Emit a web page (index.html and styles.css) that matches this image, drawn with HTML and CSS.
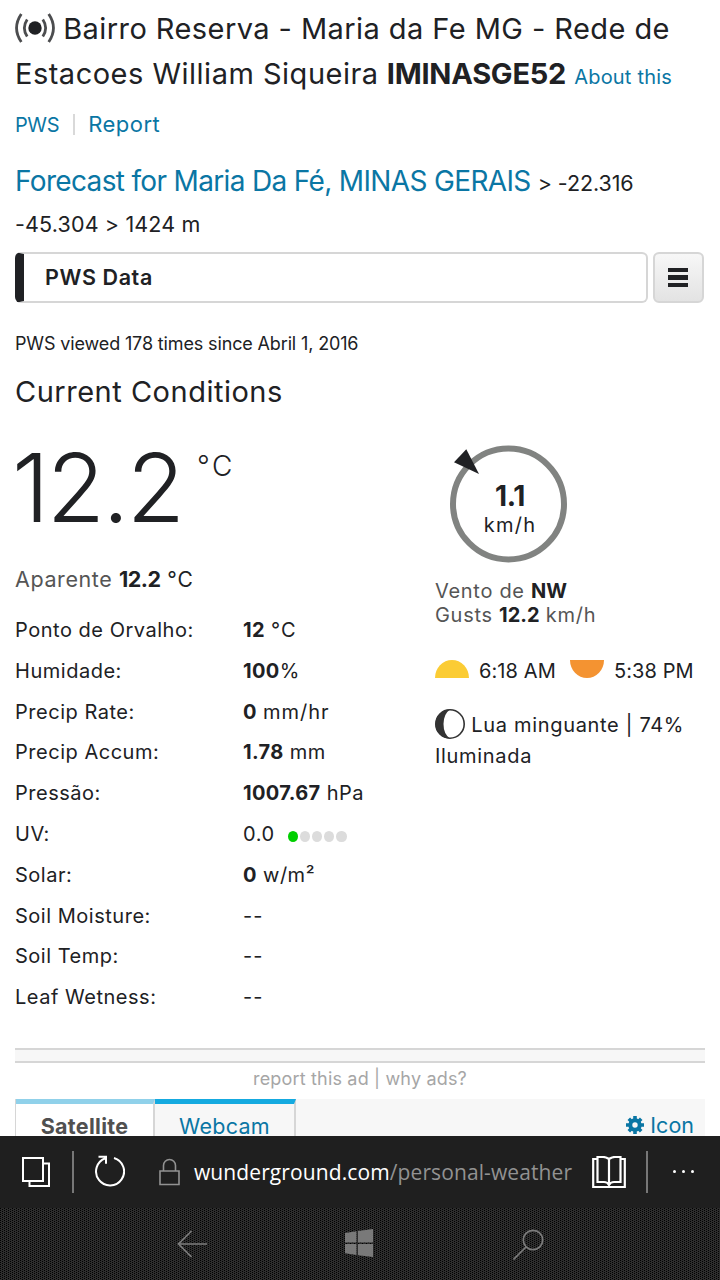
FILE: index.html
```html
<!DOCTYPE html>
<html lang="pt">
<head>
<meta charset="utf-8">
<title>IMINASGE52 - PWS Data</title>
<link rel="stylesheet" href="styles.css">
</head>

<body>
<div class="page">
	<h1 class="station">
		<svg class="signal" width="40" height="30" viewBox="0 0 40 30">
			<circle cx="20" cy="15" r="6.7" fill="#202124"/>
			<path d="M12.2 6.5Q6.5 15 12.2 23.5M27.8 6.5Q33.5 15 27.8 23.5" fill="none" stroke="#4c4d4f" stroke-width="2.8"/>
			<path d="M6.3 1Q-3.2 15 6.3 29M33.7 1Q43.2 15 33.7 29" fill="none" stroke="#4c4d4f" stroke-width="2.8"/>
		</svg>
		<span class="name">Bairro Reserva - Maria da Fe MG - Rede de</span><br>
		<span class="name2">Estacoes William Siqueira</span> <b>IMINASGE52</b> <a class="about">About this</a>
	</h1>
	<div class="links"><a class="pws">PWS</a><i></i><a class="report">Report</a></div>
	<div class="forecast"><a>Forecast for Maria Da Fé, MINAS GERAIS</a> <span>&gt; -22.316</span></div>
	<div class="coords">-45.304 &gt; 1424 m</div>

	<div class="picker">
		<div class="select">PWS Data</div>
		<div class="menu"><i></i><i></i><i></i></div>
	</div>

	<p class="viewed">PWS viewed 178 times since Abril 1, 2016</p>
	<h2>Current Conditions</h2>

	<div class="conditions">
		<div class="left">
			<div class="temp"><span class="num">12.2</span><span class="deg">°C</span></div>
			<p class="feels">Aparente <b>12.2</b> <span>°C</span></p>
			<dl>
				<dt>Ponto de Orvalho:</dt><dd><b>12</b> <span class="c">°C</span></dd>
				<dt>Humidade:</dt><dd><b>100</b>%</dd>
				<dt>Precip Rate:</dt><dd><b>0</b> <span class="c">mm/hr</span></dd>
				<dt>Precip Accum:</dt><dd><b>1.78</b> mm</dd>
				<dt>Pressão:</dt><dd><b>1007.67</b> hPa</dd>
				<dt>UV:</dt><dd>0.0 <span class="uv"><i class="on"></i><i></i><i></i><i></i><i></i></span></dd>
				<dt>Solar:</dt><dd><b>0</b> w/m²</dd>
				<dt>Soil Moisture:</dt><dd class="none">--</dd>
				<dt>Soil Temp:</dt><dd class="none">--</dd>
				<dt>Leaf Wetness:</dt><dd class="none">--</dd>
			</dl>
		</div>
		<div class="right">
			<div class="wind">
				<svg width="150" height="130" viewBox="0 0 150 130">
					<circle cx="73.5" cy="62" r="55.5" fill="none" stroke="#818381" stroke-width="6"/>
					<path d="M31.3 7.3L19 20.3L44 32Z" fill="#202124"/>
				</svg>
				<div class="speed"><b>1.1</b>km/h</div>
			</div>
			<p class="gusts">Vento de <b>NW</b><br>Gusts <b>12.2</b> km/h</p>
			<div class="sun">
				<svg width="34" height="18" viewBox="0 0 34 18"><path d="M0 18A17 18 0 0 1 34 18Z" fill="#fbcc34"/></svg>
				<span>6:18 AM</span>
				<svg width="34" height="18" viewBox="0 0 34 18"><path d="M0 0A17 18 0 0 0 34 0Z" fill="#f49331"/></svg>
				<span>5:38 PM</span>
			</div>
			<p class="moon">
				<svg width="30" height="30" viewBox="0 0 30 30">
					<circle cx="15" cy="15" r="14.2" fill="#fff" stroke="#333" stroke-width="1.6"/>
					<path d="M15 .5A14.5 14.5 0 0 0 15 29.5Q8.5 25 8.5 15Q8.5 5 15 .5Z" fill="#333"/>
				</svg>
				Lua minguante | 74%<br>Iluminada
			</p>
		</div>
	</div>

	<div class="ad"></div>
	<p class="adlinks">report this ad | why ads?</p>

	<div class="tabs">
		<a class="tab active">Satellite</a>
		<a class="tab">Webcam</a>
		<a class="icon">
			<svg width="18" height="18" viewBox="-9 -9 18 18">
				<circle r="4.7" fill="none" stroke="#0a76a4" stroke-width="4"/>
				<path d="M0-9V-5M0 9V5M-9 0H-5M9 0H5M-6.2-6.2L-4-4M6.2 6.2L4 4M-6.2 6.2L-4 4M6.2-6.2L4-4" stroke="#0a76a4" stroke-width="3.6"/>
			</svg>
			Icon
		</a>
	</div>
</div>

<div class="browser">
	<svg class="pages" width="28" height="30" viewBox="0 0 28 30" fill="none" stroke="#fff" stroke-width="2">
		<path d="M1 1H21V24H1ZM21 6.5H27V29H7.5V24"/>
	</svg>
	<i class="sep"></i>
	<svg class="reload" width="30" height="32" viewBox="0 0 30 32" fill="none" stroke="#fff" stroke-width="2">
		<path d="M19 3A14 14 0 1 1 10.5 3.2M3.5 1.8H11V8.8"/>
	</svg>
	<svg class="lock" width="21" height="28" viewBox="0 0 21 28" fill="none" stroke="#929292" stroke-width="1.6">
		<path d="M1 13H20V26.5H1ZM4.5 13V7.5A6 6 0 0 1 16.5 7.5V13"/>
	</svg>
	<span class="url">wunderground.com<em>/personal-weather</em></span>
	<svg class="book" width="34" height="32" viewBox="0 0 34 32" fill="none" stroke="#fff" stroke-width="2.2">
		<path d="M5 3H1.2V31H32.8V3H29M17 3Q14 1 11 1H5.5V26H12Q15.500 26 17 29Q18.500 26 22 26H28.5V1H23Q20 1 17 3V29"/>
	</svg>
	<i class="sep"></i>
	<span class="dots"><i></i><i></i><i></i></span>
</div>
<div class="nav">
	<svg class="back" width="30" height="28" viewBox="0 0 30 28" fill="none" stroke="#7c7c7c" stroke-width="1.7">
		<path d="M14.5 1L1.5 14L14.5 27M1.5 14H30"/>
	</svg>
	<svg class="win" width="28" height="28" viewBox="0 0 28 28" fill="#797979">
		<path d="M0 4L11.5 2.2V13.5H0ZM13 2L28 0V13.5H13ZM0 15H11.5V26L0 24.3ZM13 15H28V28L13 26.2Z"/>
	</svg>
	<svg class="find" width="31" height="31" viewBox="0 0 31 31" fill="none" stroke="#7c7c7c" stroke-width="1.7">
		<circle cx="20" cy="11" r="9.7"/><path d="M13 18L.5 30.5"/>
	</svg>
</div>
</body>
</html>
```
FILE: styles.css
```css
*{ margin:0; padding:0; box-sizing:border-box;}
body{ width:720px; height:1280px; overflow:hidden; display:flex; flex-direction:column; background:#fff; color:#202124; font-family:Inter, "Liberation Sans", sans-serif; font-weight:400;}
svg{ display:block; flex:none;}
b{ font-weight:650;}
i{ display:block;}
a{ color:#0a76a4;}
.page{ height:1136px; overflow:hidden; padding:6px 15px 0;}

.station{ height:90px; font-size:29px; line-height:45px; font-weight:400; white-space:nowrap;}
.station .signal{ display:inline-block; vertical-align:-4px;}
.name{ letter-spacing:.43px;}
.name2{ letter-spacing:.5px;}
.station b{ letter-spacing:-.26px;}
.about{ font-size:20px; letter-spacing:.2px;}
.links{ display:flex; align-items:center; height:44px; margin-top:6px; line-height:42px;}
.links i{ width:2px; height:21px; margin:0 13px 0 14px; background:#d9d9d9;}
.pws{ font-size:20px; letter-spacing:-.4px; padding-top:1px;}
.report{ font-size:22px; letter-spacing:.5px;}
.forecast{ height:42px; margin-top:14px; font-size:28px; line-height:42px; letter-spacing:-.66px; white-space:nowrap;}
.forecast span{ font-size:21.5px; letter-spacing:-.1px;}
.coords{ margin-top:1px; font-size:21.5px; line-height:42px; letter-spacing:.15px;}

.picker{ display:flex; gap:5px; height:51px; margin-top:7px; padding-right:1px;}
.select{ flex:1; border:2px solid #d6d6d6; border-left:9px solid #202124; border-radius:6px; padding-left:21px; font-size:21.5px; line-height:47px; font-weight:600; letter-spacing:.6px;}
.menu{ width:51px; border:2px solid #d6d6d6; border-radius:6px; background:linear-gradient(#f7f7f7,#e3e3e3); display:flex; flex-direction:column; align-items:center; justify-content:center; gap:3px;}
.menu i{ width:20px; height:4.5px; margin-left:-1px; background:#202124;}

.viewed{ margin-top:29px; font-size:18px; line-height:24px; letter-spacing:-.14px;}
h2{ margin-top:18px; font-size:29px; line-height:36px; font-weight:400; letter-spacing:.51px;}

.conditions{ display:flex; height:606px; margin-top:32px;}
.left{ flex:none; width:420px;}
.temp{ display:flex; height:90px;}
.num{ width:185px; font-size:95px; line-height:92px; font-weight:300; letter-spacing:-2.6px; margin-left:-3px;}
.deg{ margin-top:6px; font-size:28px; line-height:36px; font-weight:300; letter-spacing:2.5px;}
.feels{ margin-top:33px; font-size:21.5px; line-height:28px; color:#555; letter-spacing:.6px;}
.feels b{ color:#202124; letter-spacing:-.5px;}
.feels span{ color:#202124; font-size:21px; letter-spacing:1px;}
.c{ letter-spacing:1px;}
dl{ display:grid; grid-template-columns:228px 1fr; grid-auto-rows:40.8px; margin-top:16px; font-size:20px; line-height:40.8px; letter-spacing:.52px;}
dl b{ letter-spacing:.35px;}
.none{ letter-spacing:1px;}
.uv{ display:inline-flex; gap:2px; margin-left:7px; vertical-align:-1px;}
.uv i{ width:10.2px; height:11px; border-radius:50%; background:#dcdcdc;}
.uv .on{ background:#00cf00;}

.right{ flex:none; width:270px;}
.wind{ position:relative; height:130px;}
.speed{ position:absolute; left:0; top:37px; width:150px; text-align:center; font-size:20px; line-height:25px; letter-spacing:1.2px;}
.speed b{ display:block; font-size:28px; line-height:34px; letter-spacing:-.3px;}
.gusts{ margin-top:7px; font-size:20px; line-height:24px; color:#555; letter-spacing:.7px;}
.gusts b{ color:#202124; letter-spacing:0;}
.sun{ display:flex; align-items:center; margin-top:29px; font-size:20px; line-height:30px; letter-spacing:.1px; white-space:nowrap;}
.sun svg{ margin-top:-4px;}
.sun span{ margin:0 14px 0 10px;}
.moon{ margin-top:23px; font-size:20px; line-height:31px; letter-spacing:.68px;}
.moon svg{ display:inline-block; vertical-align:-7px;}

.ad{ height:15px; border:solid #d6d6d6; border-width:2px 0; background:#f7f7f7;}
.adlinks{ height:36px; font-size:18px; line-height:31px; text-align:center; color:#a6a6a6; letter-spacing:.17px;}
.tabs{ display:flex; height:37px; background:#f7f7f7; border-left:1px solid #d6d6d6; font-size:21.5px; line-height:44px;}
.tab{ width:141px; border-top:5px solid #15aae0; border-right:2px solid #d6d6d6; text-align:center; letter-spacing:.3px;}
.active{ width:139px; background:#fff; border-top-color:#90d1ea; color:#505050; font-weight:650;}
.icon{ display:flex; gap:6px; margin-left:auto; padding:4px 11px 0 0;}
.icon svg{ margin-top:13px;}

.browser{ display:flex; align-items:center; height:72px; padding-left:22px; background:#1f1f1f;}
.sep{ width:2px; height:42px; background:#777;}
.pages{ margin-right:22px;}
.reload{ margin:-2px 34px 0 21px;}
.url{ width:397px; margin-left:14px; font-family:"Open Sans", "Noto Sans", sans-serif; font-weight:400; font-size:21px; letter-spacing:.1px; color:#fff; white-space:nowrap;}
.url em{ font-style:normal; color:#929292;}
.book{ margin:0 20px 0 1px;}
.dots{ display:flex; gap:6px; margin:-1px 0 0 25px;}
.dots i{ width:3px; height:3px; border-radius:50%; background:#fff;}
/* dotted texture, 1px dots staggered in a 4px tile */
.nav{ display:flex; align-items:center; height:72px; padding-left:177px; background-color:#2d2d2d; background-image:conic-gradient(from 0deg at 1px 1px,transparent 270deg,#000 0), conic-gradient(from 0deg at 1px 1px,transparent 270deg,#000 0); background-size:4px 2px; background-position:0 0, 2px 1px;}
.win{ margin:-2px 140px 0 138px;}
```
